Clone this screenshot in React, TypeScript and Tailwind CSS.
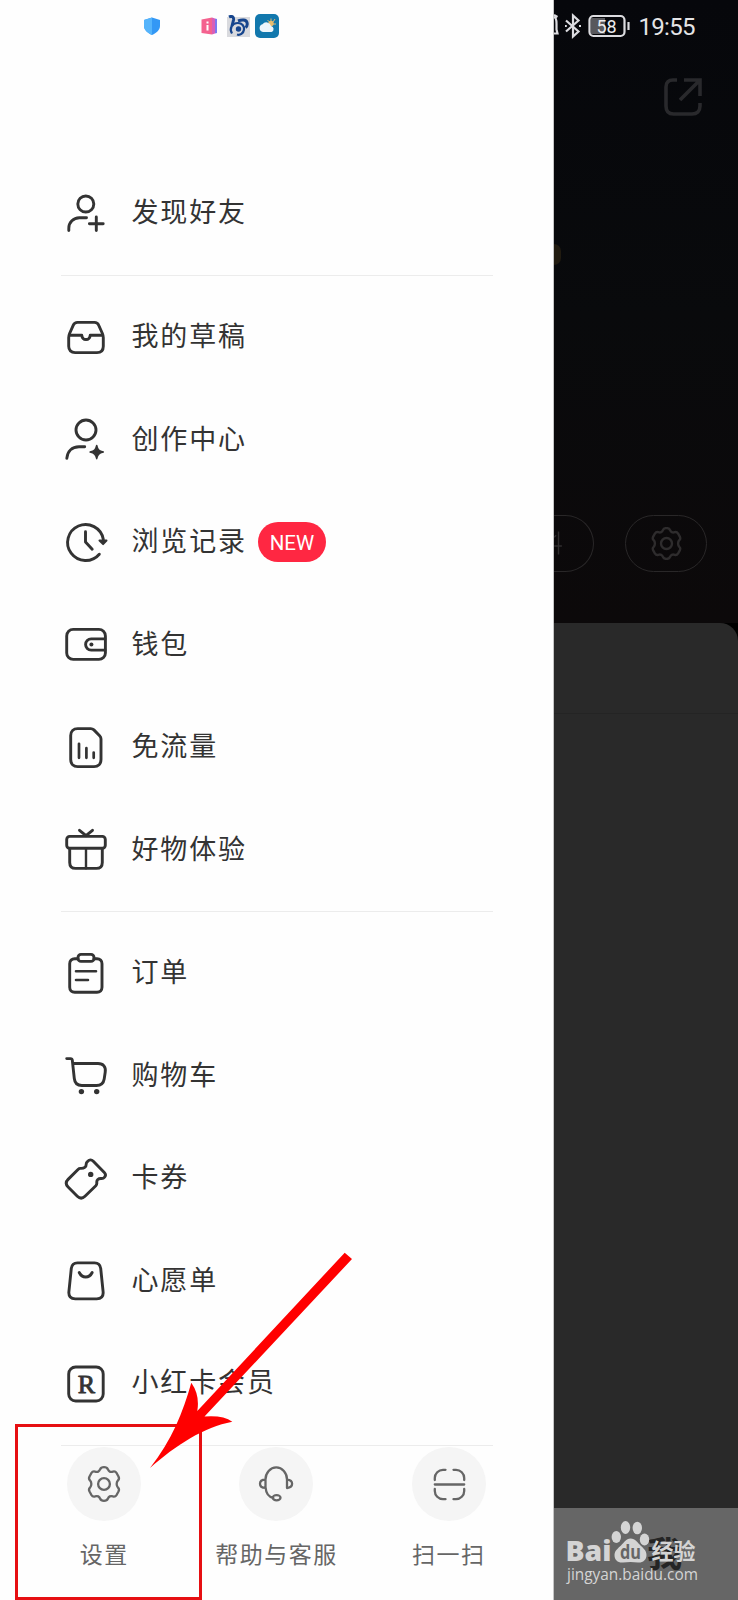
import type { ReactNode } from "react";

type Item = { label: string; icon: ReactNode; badge?: string };

const MenuIcon = ({ children }: { children: ReactNode }) => (
  <svg viewBox="0 0 48 48" className="w-12 h-12 shrink-0" fill="none" stroke="#333" strokeWidth="2.9" strokeLinecap="round" strokeLinejoin="round">
    {children}
  </svg>
);

const friends: Item[] = [
  { label: "发现好友", icon: <><circle cx="23.8" cy="15" r="8" /><path d="M6.8 41.5v-2.3a10.5 10.5 0 0 1 10.5-10.5h7.2M34.3 28v13.6M27.4 34.7h13.8" /></> },
];

const creation: Item[] = [
  { label: "我的草稿", icon: <><path d="M15.5 9.4h17c2 0 3.4.9 4.2 2.8l3.7 8.3c.6 1.4.9 2.8.9 4.3v8.4c0 4-2.4 6.4-6.4 6.4H13.1c-4 0-6.400-2.400-6.400-6.400v-8.400c0-1.500.3-2.900.9-4.300l3.700-8.300c.8-1.900 2.200-2.800 4.200-2.800z" /><path d="M7.500 22.300h12.300c.3 2.700 1.800 4.200 4.200 4.200s3.900-1.500 4.200-4.200h12.300" /></> },
  { label: "创作中心", icon: <><circle cx="24" cy="15" r="10" /><path d="M4.800 43.300c.7-6.700 5-11.500 12.200-11.500h5.700" /><path d="M34.700 30.500c1 4.300 2.200 5.500 6.600 6.600-4.400 1.100-5.600 2.300-6.600 6.600-1-4.300-2.300-5.500-6.600-6.600 4.300-1.100 5.600-2.300 6.600-6.600z" fill="#333" strokeWidth="1.500" /></> },
  { label: "浏览记录", badge: "NEW", icon: <><path d="M41.300 21.200A18 18 0 1 0 37.300 36.200M23.500 13.800V24l6.700 7.200" /><path d="M37.500 22.500h7l-3.400 3.600z" fill="#333" strokeWidth="2" /></> },
  { label: "钱包", icon: <><rect x="4.700" y="9.400" width="38.700" height="30" rx="6.500" /><path d="M43 18.900H29.200a5.600 5.600 0 0 0 0 11.200H43" /><circle cx="29.400" cy="24.400" r="2" fill="#333" stroke="none" /></> },
  { label: "免流量", icon: <><path d="M15.700 5.600h13c1.300 0 2.300.4 3.200 1.300l5.700 5.800c.9.900 1.400 1.900 1.400 3.200v20.700c0 4.300-2.700 7-7 7H15.700c-4.300 0-7-2.700-7-7v-24c0-4.300 2.700-7 7-7z" /><path d="M17 20.800v14M24.400 25.200v9.600M31.700 29.600v5.200" strokeWidth="2.700" /></> },
  { label: "好物体验", icon: <><rect x="4.700" y="11.400" width="38.600" height="11.900" rx="3" /><path d="M7.700 23.500v13.900c0 3.800 2.200 6 6 6h20.600c3.800 0 6-2.200 6-6V23.500M17.500 5.300l6.500 5.400 6.500-5.400" /><path d="M24 23.300v20" strokeWidth="2.400" /></> },
];

const shopping: Item[] = [
  { label: "订单", icon: <><path d="M16 9.700h-3.300c-3 0-5 2-5 5v23.600c0 3 2 5 5 5H35c3 0 5-2 5-5V14.700c0-3-2-5-5-5h-3" /><rect x="16" y="5.400" width="16" height="7" rx="3" /><path d="M14 22.300h20M14 31h12" strokeWidth="2.600" /></> },
  { label: "购物车", icon: <><path d="M4.700 7.600h3.800c1 0 1.700.6 1.800 1.600l2 18.300c.5 4.600 3 7 7.500 7h14.700c4.500 0 7-2.200 7.700-6.500l1-6.800c.9-5.400-1.900-8.700-7.200-8.700H10.800" /><circle cx="19.400" cy="40.600" r="2.700" fill="#333" stroke="none" /><circle cx="34.700" cy="40.600" r="2.700" fill="#333" stroke="none" /></> },
  { label: "卡券", icon: <><path d="M25.700 7.300c1.800-1.900 3.800-1.900 5.600 0L42.300 18.500c1.600 1.600 1.600 3 .3 4.600-.9 1.100-1.900 1.500-3.300 1.400-3.100-.2-4.800 1.400-4.500 4.300.1 1.200-.2 2-1 2.900L23 42.200c-2.500 2.500-5.200 2.500-7.700 0l-9.200-9.300c-2.400-2.400-2.400-5.100 0-7.500l9.900-10c.8-.8 1.500-1.100 2.600-1 3.500.2 5.700-1.300 5.600-4.400 0-1.200.6-1.900 1.500-2.700z" /><circle cx="28.700" cy="20.400" r="2.700" fill="#333" stroke="none" /></> },
  { label: "心愿单", icon: <><path d="M15.500 6.900h17c3.600 0 5.700 1.900 6.200 5.500l2.400 23.300c.5 4.400-1.900 7.200-6.400 7.200H13.300c-4.500 0-6.900-2.800-6.400-7.200l2.400-23.300c.5-3.600 2.600-5.500 6.200-5.500z" /><path d="M17.200 16.500c3 6 10 6 13 0" /></> },
  {
    label: "小红卡会员",
    icon: <><rect x="6.700" y="8" width="34.500" height="34" rx="7" /><text x="15.700" y="33.500" fontSize="26" fontFamily="Liberation Serif, serif" fill="#333" strokeWidth="0.9">R</text></>,
  },
];

const gearPath =
  "M14.200 3.200Q15 1.200 18 1.200T21.800 3.200C22.600 5.500 24.500 6.500 27 5.600Q29.200 4.900 30.700 7.200L32.500 10.500Q33.700 13 32 14.400C30.200 16.200 30.200 19.800 32 21.600Q33.700 23 32.500 25.500L30.700 28.800Q29.200 31.100 27 30.400C24.500 29.500 22.600 30.500 21.800 32.800Q21 34.800 18 34.800T14.200 32.800C13.400 30.500 11.500 29.500 9 30.400Q6.800 31.100 5.300 28.800L3.500 25.500Q2.300 23 4 21.600C5.800 19.800 5.800 16.200 4 14.400Q2.300 13 3.500 10.500L5.300 7.200Q6.800 4.900 9 5.600C11.500 6.500 13.400 5.500 14.200 3.200Z";

const actions: Item[] = [
  { label: "设置", icon: <><path d={gearPath} /><circle cx="18" cy="18" r="5.900" /></> },
  { label: "帮助与客服", icon: <><path d="M7.500 21V13.500a10.500 11.800 0 0 1 21.500 0V22M7.500 13.700c-3.400 0-5.500 1.700-5.500 4.100s2.100 4.100 5.500 4.100M29 13.700c3.400.3 5.100 1.900 5.100 4.100S32.400 21.700 29 22M7.500 21c.5 6 3.500 10.200 7.800 10.800" /><ellipse cx="18.600" cy="31.700" rx="3.900" ry="2.600" /></> },
  { label: "扫一扫", icon: <><path d="M14.500 3.800H12c-4.500 0-8.200 3.700-8.200 8.200V14M22.500 3.800H25c4.500 0 8.200 3.700 8.200 8.200V14M3.800 23v2c0 4.500 3.700 8.200 8.200 8.200h2.500M33.200 23v2c0 4.500-3.700 8.200-8.200 8.200h-2.500M3.800 18.500h29.400" /></> },
];

function MenuGroup({ items }: { items: Item[] }) {
  return (
    <ul>
      {items.map((item) => (
        <li key={item.label} className="flex items-center h-[102.5px] pl-[62px]">
          <MenuIcon>{item.icon}</MenuIcon>
          <span className="ml-[21.500px] pb-[3px] text-[27px] leading-[40px] tracking-[1.850px] text-[#333]">{item.label}</span>
          {item.badge && (
            <span className="ml-[11px] w-[68px] h-10 rounded-full bg-[#ff2742] text-white text-[20.500px] leading-[42px] text-center font-['Roboto',sans-serif]">{item.badge}</span>
          )}
        </li>
      ))}
    </ul>
  );
}

const Divider = () => <hr className="ml-[61px] w-[432px] h-px border-0 bg-[#ececec]" />;

function NotificationIcons() {
  return (
    <div className="flex items-center h-[52px] pl-[142px]">
      <svg viewBox="0 0 20 20" className="w-5 h-5">
        <path d="M10 1.500 2 4v6c0 4 3.500 7 8 9 4.500-2 8-5 8-9V4z" fill="#3398f5" />
        <path d="M10 1.500 2 4v6c0 4 3.500 7 8 9z" fill="#55b4fb" />
      </svg>
      <svg viewBox="0 0 20 20" className="ml-[37px] w-5 h-5">
        <path d="M2.500 3.500 13 1.500v17L2.500 17z" fill="#f4628f" />
        <path d="m13 1.500 3 1v15l-3 1z" fill="#d75fb8" />
        <path d="m16 2.500 2 .5v14l-2 .5z" fill="#7d78f0" />
        <path d="M8.500 5.500v2M8.500 9v5.500" stroke="#fff" strokeWidth="2" />
      </svg>
      <svg viewBox="0 0 24 22" className="ml-[7px] w-6 h-[22px]">
        <rect x="1" y="2" width="23" height="20" fill="#d9dade" />
        <path d="M3 2c3-1.500 5 0 4.500 3L6 11M12 6c4-1.500 8-1.500 9 1.500.5 2 0 4-1.500 5" fill="none" stroke="#17458d" strokeWidth="3" />
        <path d="M6 18.500c-3-5 0-10.500 6-10.500 4 0 6.500 3 6 6.500-.5 4-4 6-7 5" fill="none" stroke="#17458d" strokeWidth="2.200" />
        <circle cx="12.500" cy="14" r="2.700" fill="#17458d" />
      </svg>
      <svg viewBox="0 0 24 24" className="ml-[5px] w-6 h-6">
        <rect width="24" height="24" rx="5" fill="#1278ad" />
        <path d="M16 4.500v3M12.500 6l2 2M20 5l-2 3M21 10h-3" stroke="#e3b96b" strokeWidth="1" />
        <circle cx="16" cy="9.500" r="2.700" fill="#e8bd70" />
        <path d="M8 18a4 4 0 0 1-.5-7.800 4.800 4.800 0 0 1 8.500 1.800 3.100 3.100 0 0 1 .5 6z" fill="#eef6fb" />
      </svg>
    </div>
  );
}

function Drawer() {
  return (
    <aside className="flex flex-col w-[554px] h-full bg-[#fefefe] border-r border-[#8b8b8b]/50">
      <div className="h-[161.500px]">
        <NotificationIcons />
      </div>
      <MenuGroup items={friends} />
      <div className="pt-[11px] pb-[9.500px]"><Divider /></div>
      <MenuGroup items={creation} />
      <div className="pt-[10px] pb-[10px]"><Divider /></div>
      <MenuGroup items={shopping} />
      <div className="pt-[10.500px]"><Divider /></div>
      <div className="grid grid-cols-[repeat(3,172.300px)] pl-[18px] pt-[1px]">
        {actions.map((a) => (
          <button key={a.label} className="flex flex-col items-center">
            <span className="flex items-center justify-center w-[74px] h-[74px] rounded-full bg-[#f5f5f5]">
              <svg viewBox="0 0 36 36" className="w-9 h-9" fill="none" stroke="#666" strokeWidth="2.300" strokeLinecap="round" strokeLinejoin="round">{a.icon}</svg>
            </span>
            <span className="mt-[14px] text-[23px] leading-[36px] tracking-[1.500px] text-[#666] whitespace-nowrap">{a.label}</span>
          </button>
        ))}
      </div>
    </aside>
  );
}

function StatusBar() {
  return (
    <div className="flex items-center h-[52px] text-[#e4e4e6]">
      <svg viewBox="0 0 76 26" className="w-[76px] h-[26px]" fill="none" stroke="#dcdce0" strokeWidth="2.200">
        <path d="M0 4c2 .5 2.500 3 2.500 6.500v6l1 4H0M0 2l3.500 2" />
        <path d="m12 7.500 12.500 11-5.500 5V2.500l5.500 5-12.500 11M11 13h1.800M25 13h2" />
        <rect x="37" y="5" width="14" height="16" fill="#58585c" stroke="none" />
        <rect x="35.500" y="3" width="35" height="20" rx="4" />
        <path d="M74.500 9v8" strokeWidth="2.200" />
        <text x="52.500" y="19.500" fontSize="18" textAnchor="middle" fontFamily="Roboto, sans-serif" fill="#ececee" stroke="none">58</text>
      </svg>
      <span className="ml-[8.500px] pt-px text-[24px] tracking-[-0.700px] leading-none font-['Roboto',sans-serif]">19:55</span>
    </div>
  );
}

function Watermark() {
  return (
    <svg viewBox="0 0 184 92" className="w-[184px] h-[92px]" fontFamily="Noto Sans CJK SC, sans-serif">
      <text x="93" y="59" fontSize="35" fontWeight="700" fill="#252525">我</text>
      <g fill="#d4d4d4">
        <text x="11.500" y="53" fontSize="29" fontWeight="800" fontFamily="Open Sans, sans-serif" textLength="46" lengthAdjust="spacingAndGlyphs">Bai</text>
        <ellipse cx="62.300" cy="29" rx="4.700" ry="6" />
        <ellipse cx="71.500" cy="19.500" rx="4.700" ry="6.500" />
        <ellipse cx="83.300" cy="20" rx="4.700" ry="6.300" />
        <ellipse cx="90.500" cy="31.500" rx="4.700" ry="6" />
        <path d="M76.500 30.500c5 0 7 4 10 7s6 5 6 9.500c0 5-4 8-8.500 7.500-5-.8-10-.8-15 0-5 .5-8.500-2.500-8.500-7.500 0-4.500 3.500-6.500 6.500-9.500s5-7 9.500-7z" />
        <text x="97.500" y="51" fontSize="22" fontWeight="700">经验</text>
        <text x="13" y="71.500" fontSize="17" fontFamily="Open Sans, sans-serif" textLength="131" lengthAdjust="spacingAndGlyphs">jingyan.baidu.com</text>
      </g>
      <text x="66" y="51" fontSize="19" fontWeight="700" fontFamily="Open Sans, sans-serif" fill="#666" textLength="21" lengthAdjust="spacingAndGlyphs">du</text>
    </svg>
  );
}

function ProfileBackdrop() {
  return (
    <section className="flex flex-col flex-1 h-full overflow-hidden bg-black">
      <div className="h-[623px] flex flex-col bg-linear-to-b from-[#06070b] via-[#090a0c] to-[#0c090a]">
        <StatusBar />
        <svg viewBox="0 0 38 38" className="ml-[110px] mt-[26px] w-[38px] h-[38px]" fill="none" stroke="#29292c" strokeWidth="3.600">
          <path d="M13 2H9C4.500 2 2 4.500 2 9v19c0 5 2.500 8 7.500 8H28c5 0 8-3 8-8v-3M20 2h16v16M36 2 16 22" />
        </svg>
        <div className="mt-[128px] w-[7px] h-[21px] rounded-r-full bg-[#211b10]" />
        <div className="mt-[250px] flex items-center">
          <div className="w-[40px] h-[57px] rounded-r-full border border-l-0 border-[#292728]">
            <svg viewBox="0 0 10 57" className="w-2.5 h-[55px]" fill="none" stroke="#302e2f" strokeWidth="1.500"><path d="M4.500 16v24M0 31h8M0 22l2-2" /></svg>
          </div>
          <div className="ml-[31px] w-[82px] h-[57px] rounded-full border border-[#292728] flex items-center justify-center">
            <svg viewBox="0 0 36 36" className="w-[33px] h-[33px]" fill="none" stroke="#2e2c2d" strokeWidth="2.600"><path d={gearPath} /><circle cx="18" cy="18" r="6" /></svg>
          </div>
        </div>
      </div>
      <div className="flex-1 rounded-tr-[18px] bg-[#292929]">
        <div className="h-[91px] border-b border-[#242424]" />
      </div>
      <div className="h-[92px] bg-[#666]">
        <Watermark />
      </div>
    </section>
  );
}

export default function App() {
  return (
    <main className="relative flex w-[738px] h-[1600px] overflow-hidden bg-white font-['Noto_Sans_CJK_SC',sans-serif]">
      <Drawer />
      <ProfileBackdrop />
      <div className="absolute left-[15px] top-[1424px] w-[187px] h-[176px] border-[3px] border-[#e60f12]" />
      <svg viewBox="0 0 220 230" className="absolute left-[140px] top-[1245px] w-[220px] h-[230px] pointer-events-none">
        <path d="M204.700 7.700 212 14 64.500 171.500Q83 170 92.300 176.700C64 182 36 200 10 223 32 195 43 167 51.300 137.700Q60 150 57.300 166Z" fill="#f00" />
      </svg>
    </main>
  );
}
